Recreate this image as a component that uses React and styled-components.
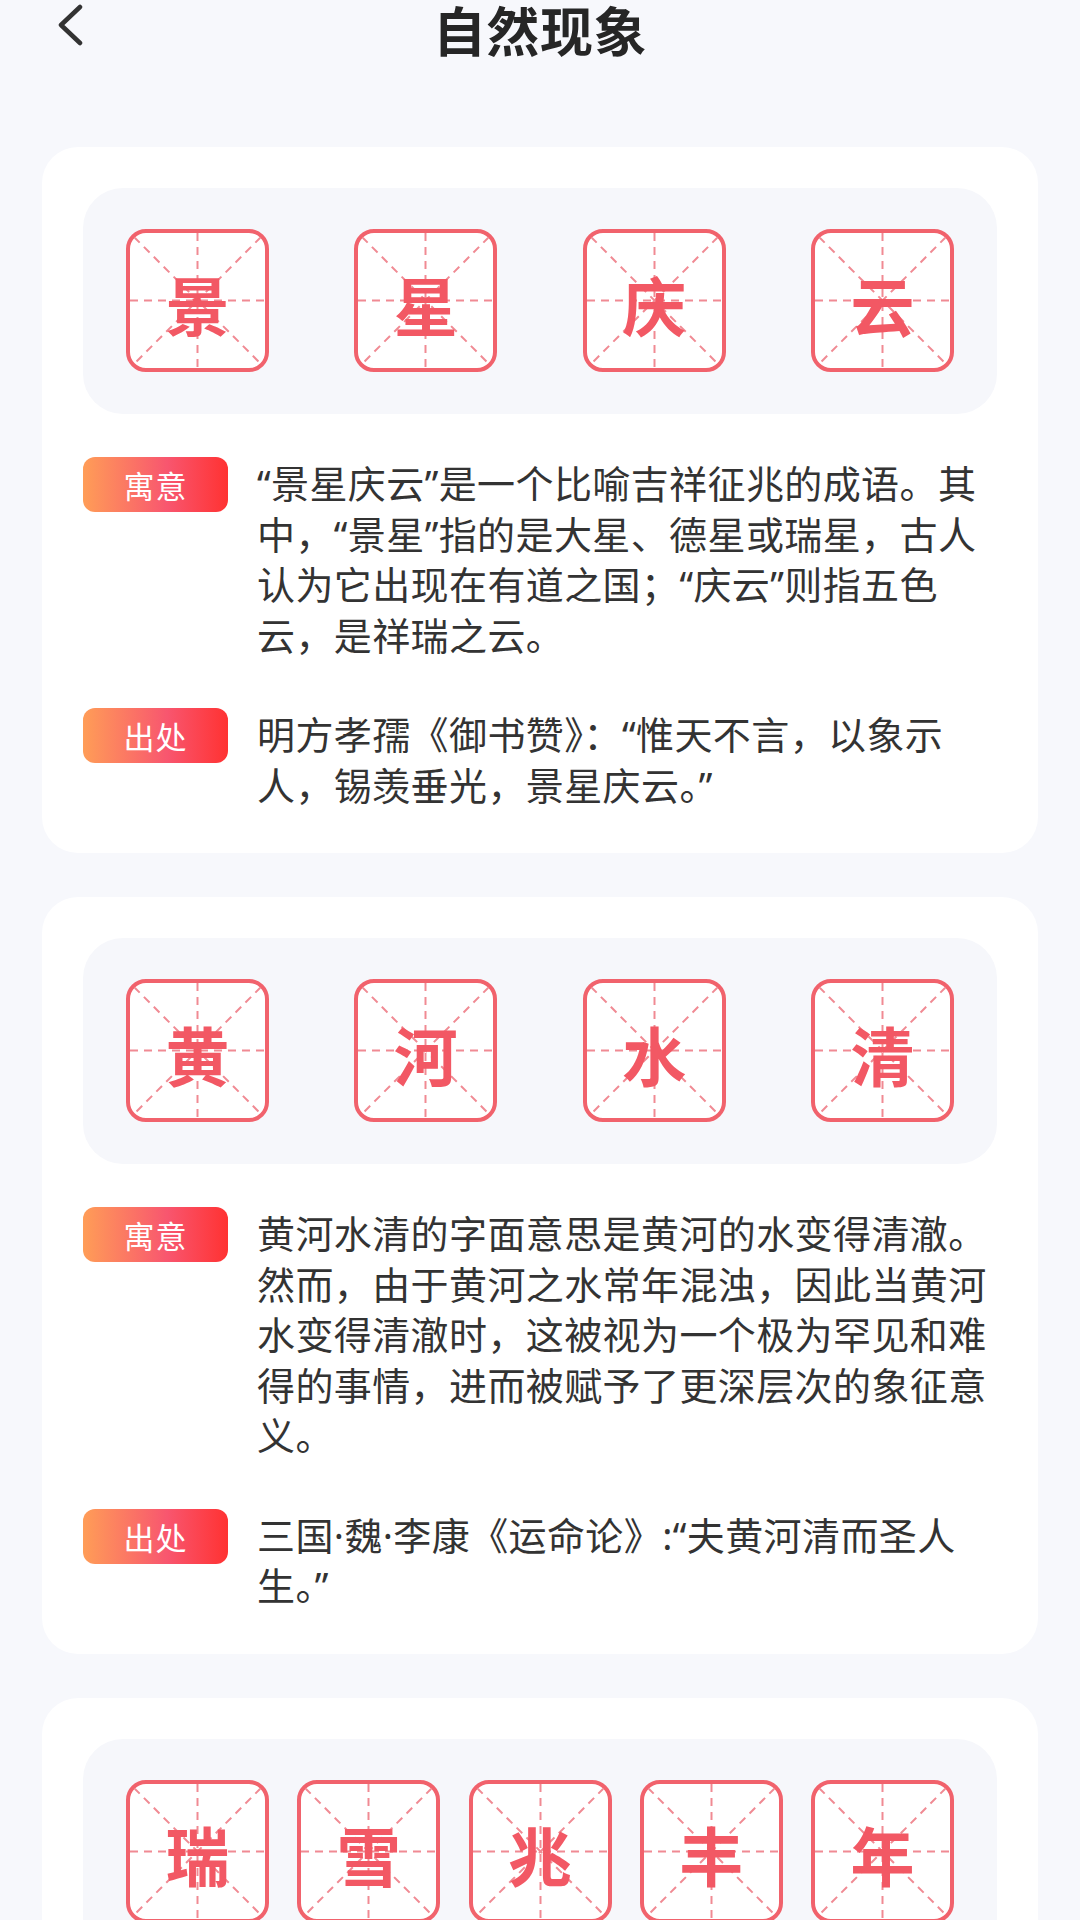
import React from "react";
import styled, { createGlobalStyle } from "styled-components";

const GlobalStyle = createGlobalStyle`
  html, body {
    margin: 0;
    padding: 0;
    background: #f7f8fc;
  }
  body {
    font-family: "Noto Sans CJK SC", "Noto Sans", sans-serif;
    color: #333;
  }
  * { box-sizing: border-box; }
`;

const Page = styled.div`
  width: 1080px;
  min-height: 1920px;
  background: #f7f8fc;
  overflow: hidden;
`;

const Header = styled.header`
  display: grid;
  grid-template-columns: 1fr auto 1fr;
  align-items: start;
  height: 62px;
`;

const BackButton = styled.button`
  justify-self: start;
  margin: 4px 0 0 52px;
  width: 36px;
  height: 42px;
  padding: 0;
  border: none;
  background: none;
  display: flex;
  align-items: center;
  justify-content: center;
  color: #333;
`;

const Title = styled.h1`
  margin: 0;
  font-size: 53px;
  line-height: 58px;
  font-weight: 700;
  color: #262626;
  letter-spacing: 0.5px;
`;

const List = styled.main`
  display: flex;
  flex-direction: column;
  gap: 44px;
  padding: 85px 42px 40px;
`;

const Card = styled.section`
  background: #ffffff;
  border-radius: 36px;
  padding: 41px 41px 43px;
`;

const Board = styled.div`
  background: #f6f7fb;
  border-radius: 40px;
  padding: 41px 43px 42px;
  display: flex;
  justify-content: space-between;
`;

const CharBox = styled.div`
  position: relative;
  width: 143px;
  height: 143px;
  border: 4px solid #f1626c;
  border-radius: 20px;
  background: #ffffff;
  display: flex;
  align-items: center;
  justify-content: center;
  overflow: hidden;
`;

const Guides = styled.svg`
  position: absolute;
  inset: 0;
  width: 100%;
  height: 100%;
`;

const Char = styled.span`
  position: relative;
  font-size: 64px;
  line-height: 1;
  font-weight: 700;
  color: #f25864;
  margin-top: 4px;
`;

const Rows = styled.div`
  display: flex;
  flex-direction: column;
  gap: 48px;
  margin-top: 43px;
`;

const Row = styled.div`
  display: flex;
  align-items: flex-start;
  gap: 29px;
`;

const Badge = styled.span`
  flex: none;
  width: 145px;
  height: 55px;
  border-radius: 12px;
  background: linear-gradient(90deg, #ff9d57 0%, #f8566f 58%, #ff3232 100%);
  color: #ffffff;
  font-size: 31px;
  font-weight: 400;
  line-height: 55px;
  text-align: center;
  letter-spacing: 1px;
`;

const Body = styled.p`
  flex: 1;
  margin: 0;
  padding-top: 1px;
  font-family: "Noto Sans", "Noto Sans CJK SC", sans-serif;
  font-size: 38px;
  letter-spacing: 0.4px;
  line-height: 50.5px;
  color: #333333;
  text-align: left;
`;

function GridLines() {
  const common = {
    stroke: "#f08a93",
    strokeWidth: 2,
    strokeDasharray: "8 6",
    vectorEffect: "non-scaling-stroke",
  };
  return (
    <Guides viewBox="0 0 135 135" preserveAspectRatio="none" aria-hidden="true">
      <line x1="67.5" y1="0" x2="67.5" y2="135" {...common} />
      <line x1="0" y1="67.5" x2="135" y2="67.5" {...common} />
      <line x1="4" y1="4" x2="131" y2="131" {...common} />
      <line x1="131" y1="4" x2="4" y2="131" {...common} />
    </Guides>
  );
}

const idioms = [
  {
    chars: ["景", "星", "庆", "云"],
    meaning:
      "“景星庆云”是一个比喻吉祥征兆的成语。其中，“景星”指的是大星、德星或瑞星，古人认为它出现在有道之国；“庆云”则指五色云，是祥瑞之云。",
    source: "明方孝孺《御书赞》：“惟天不言，以象示人，锡羡垂光，景星庆云。”",
  },
  {
    chars: ["黄", "河", "水", "清"],
    meaning:
      "黄河水清的字面意思是黄河的水变得清澈。然而，由于黄河之水常年混浊，因此当黄河水变得清澈时，这被视为一个极为罕见和难得的事情，进而被赋予了更深层次的象征意义。",
    source: "三国·魏·李康《运命论》:“夫黄河清而圣人生。”",
  },
  {
    chars: ["瑞", "雪", "兆", "丰", "年"],
    meaning:
      "冬天下的大雪是来年丰收的预兆。适时的冬雪可以冻死害虫，并为土地保持水分，有利于农作物的生长。",
    source: "清·石玉昆《三侠五义》：“瑞雪兆丰年。”",
  },
];

export default function App() {
  return (
    <Page>
      <GlobalStyle />
      <Header>
        <BackButton aria-label="返回">
          <svg width="30" height="42" viewBox="0 0 30 42" fill="none">
            <path
              d="M25 3 L6 21 L25 39"
              stroke="#333"
              strokeWidth="4.5"
              strokeLinecap="round"
              strokeLinejoin="round"
            />
          </svg>
        </BackButton>
        <Title>自然现象</Title>
        <span />
      </Header>
      <List>
        {idioms.map((item) => (
          <Card key={item.chars.join("")}>
            <Board>
              {item.chars.map((c, i) => (
                <CharBox key={i}>
                  <GridLines />
                  <Char>{c}</Char>
                </CharBox>
              ))}
            </Board>
            <Rows>
              <Row>
                <Badge>寓意</Badge>
                <Body>{item.meaning}</Body>
              </Row>
              <Row>
                <Badge>出处</Badge>
                <Body>{item.source}</Body>
              </Row>
            </Rows>
          </Card>
        ))}
      </List>
    </Page>
  );
}
